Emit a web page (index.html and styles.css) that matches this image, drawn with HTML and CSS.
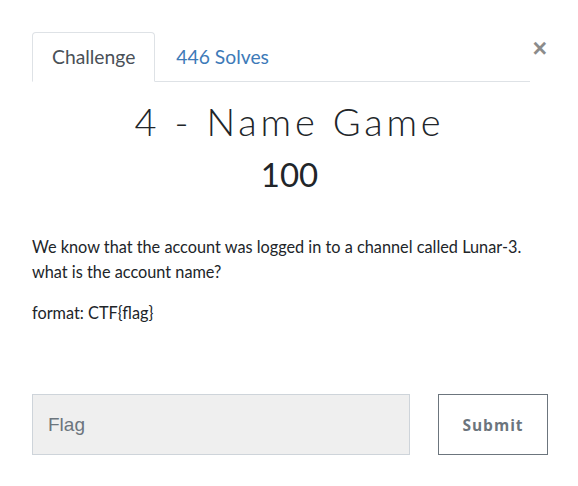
FILE: index.html
```html
<!DOCTYPE html>
<html>
<head>
<meta charset="utf-8">
<link rel="stylesheet" href="styles.css">
</head>
<body>
<div class="modal">
  <div class="header">
    <ul class="tabs">
      <li class="tab active">Challenge</li>
      <li class="tab link">446 Solves</li>
    </ul>
    <button class="close" aria-label="Close">×</button>
  </div>
  <div class="content">
    <h2 class="title">4 - Name Game</h2>
    <h3 class="value">100</h3>
    <div class="desc">
      <p>We know that the account was logged in to a channel called Lunar-3. what is the account name?</p>
      <p>format: CTF{flag}</p>
    </div>
    <div class="submit-row">
      <input class="flag" type="text" placeholder="Flag">
      <button class="submit">Submit</button>
    </div>
  </div>
</div>
</body>
</html>
```
FILE: styles.css
```css
* { box-sizing: border-box; }
html, body { margin: 0; padding: 0; background: #fff; }
body { font-family: "Lato", "Liberation Sans", sans-serif; color: #212529; font-size: 16.3px; line-height: 25px; }
.modal { padding: 32px 31px 0 32px; width: 578px; }
.header { display: flex; align-items: flex-start; }
.tabs { flex: 1; display: flex; list-style: none; margin: 0; padding: 0; border-bottom: 1px solid #dee2e6; }
.tab { padding: 12px 19px; font-size: 19.3px; line-height: 24px; border: 1px solid transparent; border-radius: 4px 4px 0 0; margin-bottom: -1px; }
.tab.active { color: #495057; border-color: #dee2e6 #dee2e6 #fff; background: #fff; }
.tab.link { color: #3d7ab8; padding-left: 20px; }
.close { background: none; border: 0; padding: 0; margin: 6px 0 0 0; width: 17px; text-align: right; font-family: "Liberation Sans", sans-serif; font-size: 25px; line-height: 20px; font-weight: 700; color: #000; opacity: .45; cursor: pointer; }
.title { margin: 15px 0 0; text-align: center; font-family: "Lato", sans-serif; font-weight: 300; font-size: 38px; line-height: 48px; letter-spacing: 3.8px; color: #212529; }
.value { margin: 9px 0 0; text-align: center; font-weight: 400; font-size: 33px; line-height: 40px; color: #212529; }
.desc { margin-top: 40px; }
.desc p { margin: 0 0 16px; }
.submit-row { display: flex; justify-content: space-between; margin-top: 69px; width: 516px; }
.flag { width: 378px; height: 61px; background: #efefef; border: 1px solid #ced4da; padding: 0 15px; font-family: "Liberation Sans", Arial, sans-serif; font-size: 19px; color: #495057; border-radius: 0; }
.flag::placeholder { color: #6c757d; }
.submit { width: 110px; height: 61px; background: #fff; border: 1px solid #6c757d; border-radius: 0; color: #6c757d; font-family: "Open Sans", sans-serif; font-weight: 700; font-size: 15.5px; letter-spacing: 1px; }
```
